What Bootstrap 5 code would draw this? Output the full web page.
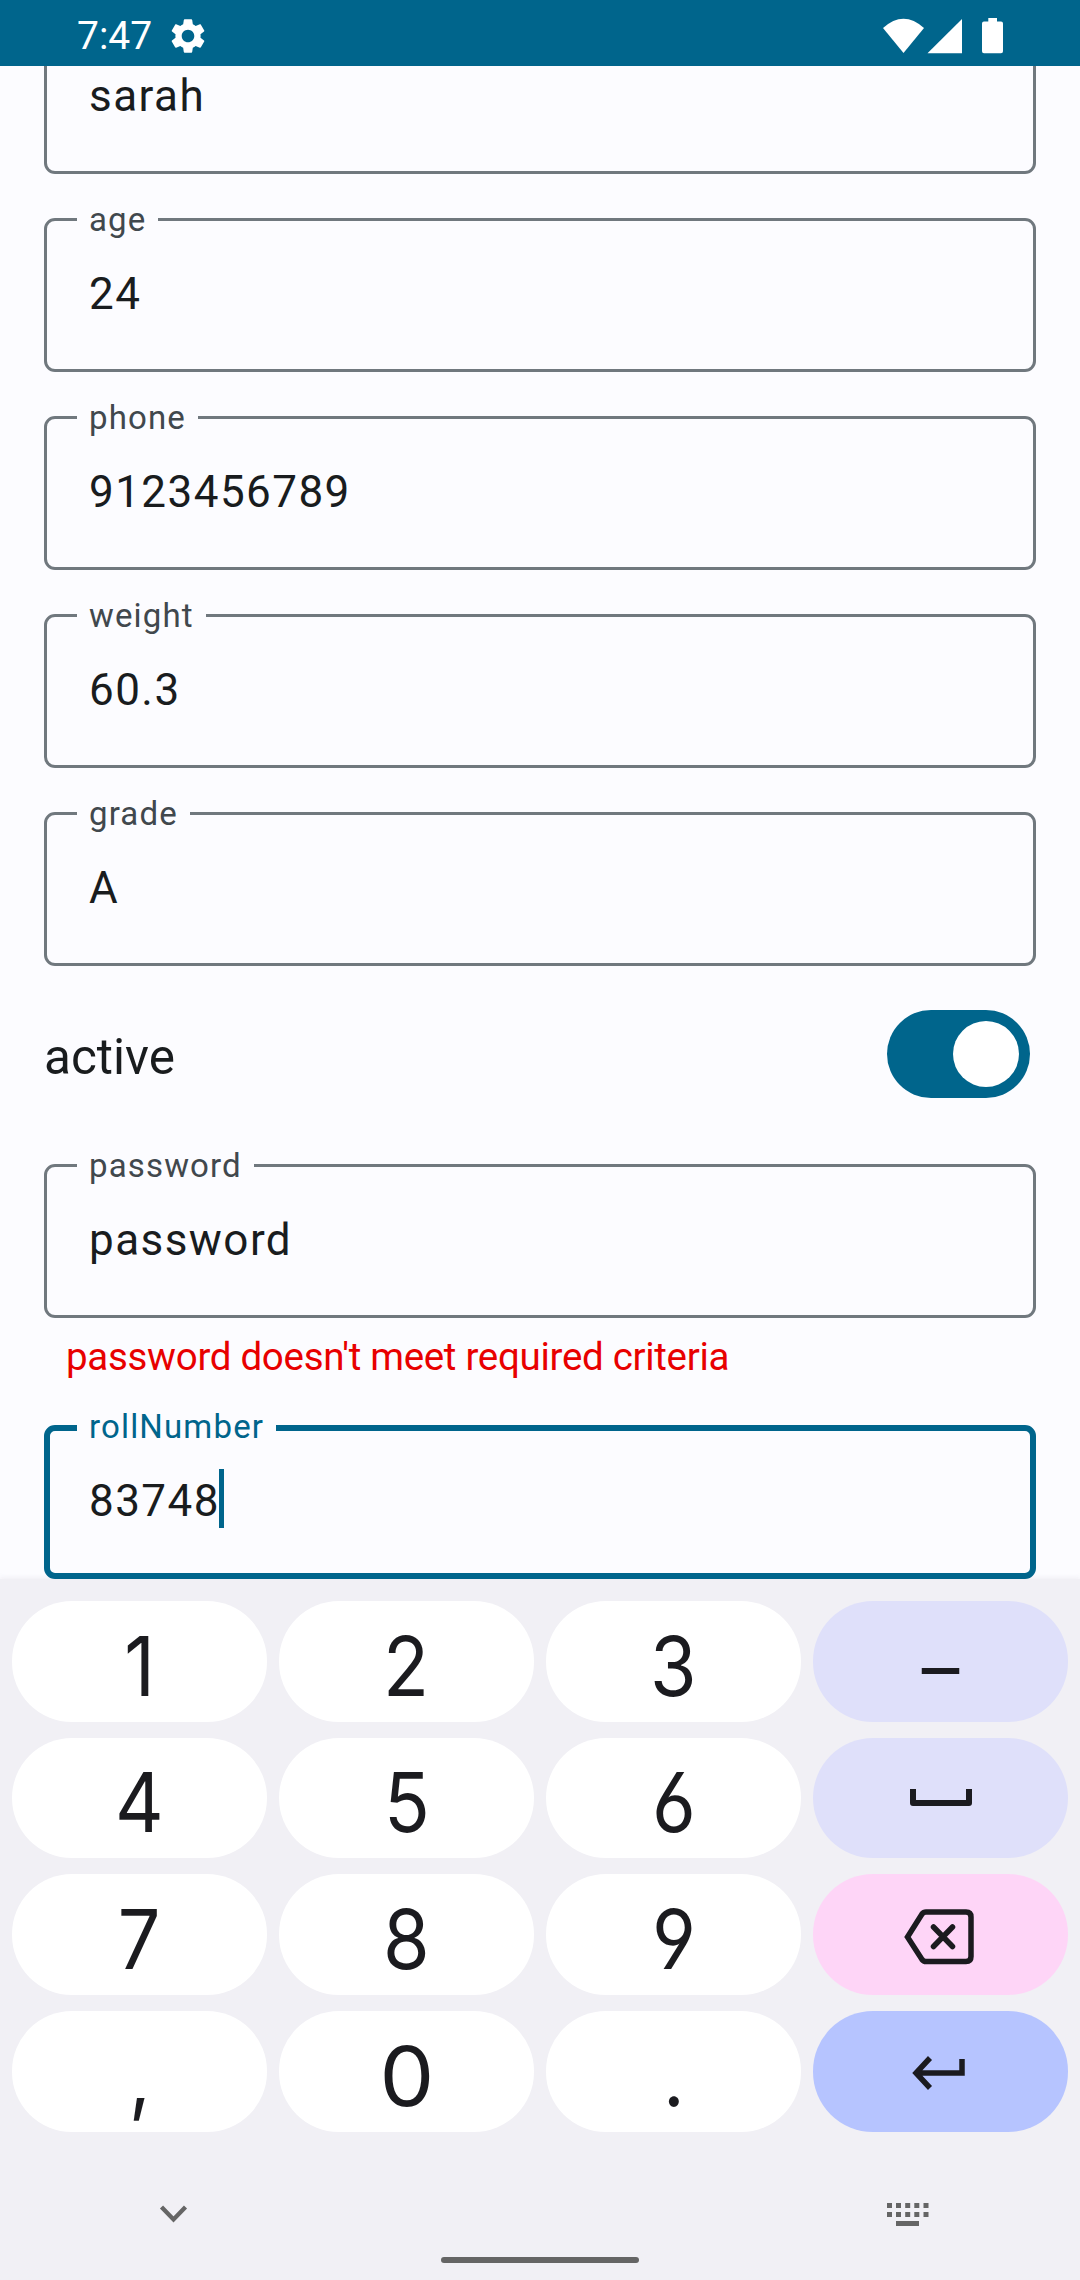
<!DOCTYPE html>
<html lang="en">
<head>
<meta charset="utf-8">
<meta name="viewport" content="width=device-width, initial-scale=1">
<title>Student form</title>
<link href="https://cdn.jsdelivr.net/npm/bootstrap@5.3.0/dist/css/bootstrap.min.css" rel="stylesheet">
<style>
  :root { --brand: #00658c; --ink: #191c1e; --outline: #70787e; --surface: #fcfcff; --board: #f1f0f5; }
  html, body { height: 2280px; overflow: hidden; }
  body { font-family: Roboto, "Noto Sans", sans-serif; background: var(--surface); color: var(--ink); width: 1080px; }
  svg { display: block; flex: none; }
  .status-bar { height: 66px; background: var(--brand); padding: 5px 77px 0 77px; font-size: 39px; line-height: 62px; z-index: 2; }
  .gear { margin-left: 15px; }
  .form-area { height: 1513px; padding: 0 44px; z-index: 1; }
  .field-box { height: 154px; border: 3px solid var(--outline); border-radius: 11px; margin-bottom: 44px; padding: 47px 42px 0; font-size: 44px; letter-spacing: 1.45px; line-height: 52px; flex: none; }
  .field-first { margin-top: -46px; }
  .field-label { left: 30px; top: -21px; padding: 0 12px; background: var(--surface); color: #41484d; font-size: 33px; letter-spacing: 1.15px; line-height: 40px; }
  .field-active { border: 6px solid var(--brand); padding: 44px 39px 0; margin-bottom: 0; }
  .field-active .field-label { left: 27px; top: -24px; color: var(--brand); }
  .caret { width: 5.5px; height: 59px; background: var(--brand); margin-left: -1px; margin-top: -6px; }
  .active-row { height: 88px; margin-bottom: 66px; font-size: 49.5px; line-height: 58px; padding-right: 6px; }
  .active-name { padding-top: 6px; }
  .toggle { width: 143px; height: 88px; background: var(--brand); padding: 11px; }
  .toggle-knob { width: 66px; height: 66px; }
  .error-text { color: #e80000; font-size: 38.5px; letter-spacing: -.3px; line-height: 45px; padding-left: 22px; height: 107px; padding-top: 16px; margin-top: -44px; }
  .board { height: 701px; background: var(--board); box-shadow: 0 -2px 4px rgba(241,240,245,.9); padding: 22px 12px 0; }
  .keys { display: grid; grid-template-columns: repeat(4, 255px); grid-auto-rows: 120.5px; column-gap: 12px; row-gap: 16.2px; }
  .key-cap { background: #fff; color: #1b1b1f; border: 0; border-radius: 60px; font-family: Inter, Roboto, sans-serif; font-size: 82px; line-height: 100px; font-feature-settings: "cv03","cv04"; padding: 11px 0 0; }
  .key-cap span { display: inline-block; transform: scaleX(.92); }
  .key-cap .zero { transform: scaleX(1.06); }
  .key-cap .dash { transform: none; font-size: 75px; line-height: 106px; }
  .key-icon { padding: 0; display: flex; align-items: center; justify-content: center; }
  .key-soft { background: #dfe0fa; }
  .key-pink { background: #fed5f7; padding: 4px 3px 0 0; }
  .key-blue { background: #b6c4ff; padding: 4px 4px 0 0; }
  .nav-strip { height: 164px; padding: 0 127px 0 136px; }
  .home-pill { left: 441px; bottom: 17px; width: 198px; height: 6px; border-radius: 3px; background: #656565; }
</style>
</head>
<body class="d-flex flex-column">
<header class="status-bar d-flex align-items-center text-white position-relative">
  <span>7:47</span>
  <svg class="gear" width="42" height="42" viewBox="0 0 24 24" fill="#fff"><path d="M19.14 12.94c.04-.3.06-.61.06-.94 0-.32-.02-.64-.07-.94l2.03-1.58c.18-.14.23-.41.12-.61l-1.92-3.32c-.12-.22-.37-.29-.59-.22l-2.39.96c-.5-.38-1.03-.7-1.62-.94l-.36-2.54c-.04-.24-.24-.41-.48-.41h-3.84c-.24 0-.43.17-.47.41l-.36 2.54c-.59.24-1.13.57-1.62.94l-2.39-.96c-.22-.08-.47 0-.59.22L2.74 8.87c-.12.21-.08.47.12.61l2.03 1.58c-.05.3-.09.63-.09.94s.02.64.07.94l-2.03 1.58c-.18.14-.23.41-.12.61l1.92 3.32c.12.22.37.29.59.22l2.39-.96c.5.38 1.03.7 1.62.94l.36 2.54c.05.24.24.41.48.41h3.84c.24 0 .44-.17.47-.41l.36-2.54c.59-.24 1.13-.56 1.62-.94l2.39.96c.22.08.47 0 .59-.22l1.92-3.32c.12-.22.07-.47-.12-.61l-2.01-1.58zM12 15.6c-1.98 0-3.6-1.62-3.6-3.6s1.62-3.6 3.6-3.6 3.6 1.62 3.6 3.6-1.62 3.6-3.6 3.6z"/></svg>
  <svg class="ms-auto" width="120" height="36" viewBox="883 16.500 120 36" fill="#fff"><path d="M883 26.600Q903.500 8 924 26.600L903.500 51.500z"/><path d="M927.500 51.700H962V17.500z"/><path d="M988.300 16.500h8.700v3.500h4q2 0 2 2v27.700q0 2-2 2h-17q-2 0-2-2V22q0-2 2-2h4.300z"/></svg>
</header>
<main class="form-area d-flex flex-column position-relative">
  <div class="field-box field-first position-relative">sarah</div>
  <div class="field-box position-relative"><label class="field-label position-absolute">age</label>24</div>
  <div class="field-box position-relative"><label class="field-label position-absolute">phone</label>9123456789</div>
  <div class="field-box position-relative"><label class="field-label position-absolute">weight</label>60.3</div>
  <div class="field-box position-relative"><label class="field-label position-absolute">grade</label>A</div>
  <div class="active-row d-flex align-items-center justify-content-between flex-shrink-0">
    <span class="active-name">active</span>
    <div class="toggle rounded-pill d-flex justify-content-end"><div class="toggle-knob rounded-circle bg-white"></div></div>
  </div>
  <div class="field-box position-relative"><label class="field-label position-absolute">password</label>password</div>
  <div class="error-text flex-shrink-0">password doesn't meet required criteria</div>
  <div class="field-box field-active position-relative d-flex"><label class="field-label position-absolute">rollNumber</label><span>83748</span><span class="caret"></span></div>
</main>
<section class="board position-relative flex-shrink-0">
  <div class="keys">
    <button class="key-cap"><span>1</span></button><button class="key-cap"><span>2</span></button><button class="key-cap"><span>3</span></button><button class="key-cap key-soft"><span class="dash">–</span></button>
    <button class="key-cap"><span>4</span></button><button class="key-cap"><span>5</span></button><button class="key-cap"><span>6</span></button>
    <button class="key-cap key-icon key-soft"><svg width="62" height="17" viewBox="0 0 62 17" fill="none" stroke="#1b1b1f" stroke-width="6" stroke-linejoin="round"><path d="M3 0V14H59V0"/></svg></button>
    <button class="key-cap"><span>7</span></button><button class="key-cap"><span>8</span></button><button class="key-cap"><span>9</span></button>
    <button class="key-cap key-icon key-pink"><svg width="70" height="56" viewBox="0 0 70 56" fill="none" stroke="#1b1b1f" stroke-width="5.500"><path d="M22 3H62Q67 3 67 8V47.500Q67 52.500 62 52.500H22Q19.500 52.500 18 50.500L3.500 28L18 5Q19.500 3 22 3z"/><path stroke-linecap="round" d="M29.500 18L48.500 37.500M48.500 18L29.500 37.500"/></svg></button>
    <button class="key-cap"><span>,</span></button><button class="key-cap"><span class="zero">0</span></button><button class="key-cap"><span>.</span></button>
    <button class="key-cap key-icon key-blue"><svg width="53" height="34" viewBox="0 0 53 34" fill="none" stroke="#1b1b1f" stroke-width="5.500"><path d="M50 3V17H4M18 2L4 17L18 32"/></svg></button>
  </div>
  <div class="nav-strip d-flex align-items-center justify-content-between">
    <svg width="52" height="52" viewBox="148 2188 52 52" fill="none" stroke="#656565" stroke-width="4.300"><path d="M161.500 2207L173.500 2219.500L185.500 2207"/></svg>
    <svg width="54" height="52" viewBox="887 2188 54 52" fill="#656565"><path d="M887 2203h5v5h-5zM896 2203h5v5h-5zM905.200 2203h5v5h-5zM914.300 2203h5v5h-5zM923.500 2203h5v5h-5zM887 2212h5v5h-5zM896 2212h5v5h-5zM905.200 2212h5v5h-5zM914.300 2212h5v5h-5zM923.500 2212h5v5h-5zM896 2221h23v5h-23z"/></svg>
  </div>
  <div class="home-pill position-absolute"></div>
</section>
<script src="https://cdn.jsdelivr.net/npm/bootstrap@5.3.0/dist/js/bootstrap.bundle.min.js"></script>
</body>
</html>
